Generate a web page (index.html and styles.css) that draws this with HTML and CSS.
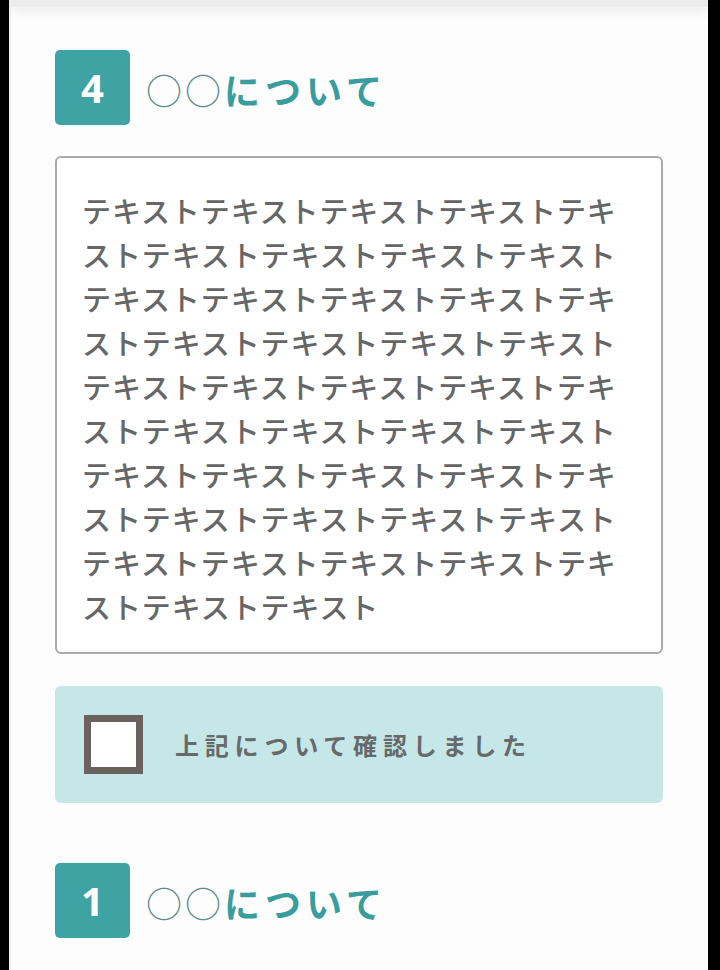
FILE: index.html
```html
<!DOCTYPE html>
<html lang="ja">
<head>
    <meta charset="UTF-8">
    <meta name="viewport" content="width=device-width, initial-scale=1.0">
    <title>確認事項</title>
    <link rel="stylesheet" href="styles.css">
</head>
<body>
    <div class="page">
        <div class="topbar"></div>
        <main class="content">
            <section class="section">
                <h2 class="section-title">
                    <span class="num">4</span>
                    <span class="title-text"><span class="marks">○○</span>について</span>
                </h2>
                <div class="text-box">
                    テキストテキストテキストテキストテキストテキストテキストテキストテキストテキストテキストテキストテキストテキストテキストテキストテキストテキストテキストテキストテキストテキストテキストテキストテキストテキストテキストテキストテキストテキストテキストテキストテキストテキストテキストテキストテキストテキストテキストテキストテキストテキストテキスト
                </div>
                <label class="confirm">
                    <input type="checkbox" class="confirm-input">
                    <span class="check"></span>
                    <span class="confirm-label">上記について確認しました</span>
                </label>
            </section>
            <section class="section">
                <h2 class="section-title">
                    <span class="num">1</span>
                    <span class="title-text"><span class="marks">○○</span>について</span>
                </h2>
            </section>
        </main>
    </div>
</body>
</html>
```

FILE: styles.css
```css
* {
    margin: 0;
    padding: 0;
    box-sizing: border-box;
}
html, body {
    height: 100%;
}
body {
    background-color: #000;
    font-family: "Noto Sans CJK JP", "Noto Sans", sans-serif;
    color: #666;
    overflow: hidden;
}
.page {
    margin: 0 12px 0 9px;
    min-height: 100%;
    background-color: #fdfdfd;
    border-left: 2px solid #f0f0f0;
}
.topbar {
    height: 7px;
    background-color: #ececec;
    box-shadow: 0 4px 12px rgba(0, 0, 0, 0.1);
}
.content {
    padding: 43px 45px 0 44px;
}
.section-title {
    display: flex;
    align-items: center;
    gap: 16px;
}
.num {
    width: 75px;
    height: 75px;
    display: flex;
    align-items: center;
    justify-content: center;
    background-color: #3fa3a3;
    border-radius: 5px;
    color: #fff;
    font-family: "Noto Sans", sans-serif;
    font-size: 40px;
    font-weight: 700;
}
.title-text {
    color: #3a9d9d;
    font-size: 36px;
    font-weight: 700;
    letter-spacing: 5px;
    line-height: 1;
    padding-top: 3px;
}
.marks {
    color: #5d8e8e;
    font-weight: 400;
    letter-spacing: 3px;
}
.text-box {
    margin-top: 31px;
    padding: 30px 34px 24px 25px;
    border: 2px solid #aaa;
    border-radius: 6px;
    background-color: #fff;
    font-size: 29px;
    font-weight: 500;
    line-height: 44px;
    letter-spacing: 0.9px;
    color: #666;
}
.confirm {
    margin-top: 32px;
    display: flex;
    align-items: center;
    gap: 32px;
    padding: 29px;
    background-color: #c6e7e7;
    border-radius: 6px;
    cursor: pointer;
}
.confirm-input {
    display: none;
}
.check {
    width: 59px;
    height: 59px;
    border: 7px solid #6b625f;
    background-color: #fff;
    flex-shrink: 0;
}
.confirm-label {
    font-size: 24px;
    font-weight: 700;
    letter-spacing: 5.8px;
    color: #676a6a;
}
.section + .section {
    margin-top: 60px;
}
```
